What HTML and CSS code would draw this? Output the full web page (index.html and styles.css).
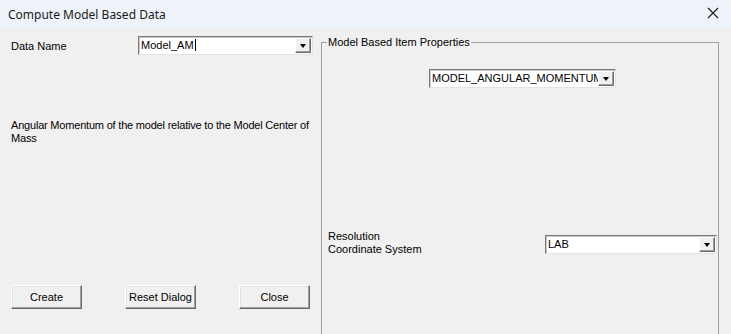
FILE: index.html
```html
<!DOCTYPE html>
<html lang="en">
<head>
    <meta charset="UTF-8">
    <meta name="viewport" content="width=device-width, initial-scale=1.0">
    <title>Compute Model Based Data</title>
    <link rel="stylesheet" href="styles.css">
</head>
<body>
    <div class="window">
        <div class="titlebar">
            <span class="title">Compute Model Based Data</span>
            <svg class="close" width="12" height="12" viewBox="0 0 12 12">
                <path d="M1 1 L11 11 M11 1 L1 11" stroke="#1a1a1a" stroke-width="1.1" fill="none"/>
            </svg>
        </div>

        <div class="dialog">
            <div class="left">
                <div class="row">
                    <span class="label">Data Name</span>
                    <div class="combo name-combo">
                        <span class="value"><span class="caret">Model_AM</span></span>
                        <span class="drop"><span class="arrow"></span></span>
                    </div>
                </div>

                <p class="desc">Angular Momentum of the model relative to the Model Center of Mass</p>

                <div class="buttons">
                    <button class="btn">Create</button>
                    <button class="btn">Reset Dialog</button>
                    <button class="btn">Close</button>
                </div>
            </div>

            <fieldset class="group">
                <legend>Model Based Item Properties</legend>

                <div class="combo item-combo">
                    <span class="value">MODEL_ANGULAR_MOMENTUM</span>
                    <span class="drop"><span class="arrow"></span></span>
                </div>

                <div class="res-row">
                    <span class="label">Resolution<br>Coordinate System</span>
                    <div class="combo lab-combo">
                        <span class="value">LAB</span>
                        <span class="drop"><span class="arrow"></span></span>
                    </div>
                </div>
            </fieldset>
        </div>
    </div>
</body>
</html>
```

FILE: styles.css
```css
body { margin: 0; background-color: #f3f3f3; font-family: "Liberation Sans", Arial, sans-serif; font-size: 11px; color: #000; }
.window { width: 731px; height: 334px; background-color: #f0f0f0; border-radius: 8px 8px 0 0; overflow: hidden; }

.titlebar { height: 29px; background-color: #eef3f9; display: flex; align-items: center; padding: 0 12px 0 8px; }
.title { font-family: "Noto Sans", "Open Sans", sans-serif; font-size: 12px; color: #1a1a1a; flex: 1; }
.close { margin-top: -3px; margin-right: 0; }

.dialog { display: flex; height: 305px; }
.left { width: 310px; padding: 7px 0 25px 11px; display: flex; flex-direction: column; }
.row { display: flex; align-items: center; height: 19px; }
.row .label { width: 127px; }

.combo { display: flex; height: 19px; box-sizing: border-box; background-color: #fff; border: 1px solid; border-color: #7a7a7a #e3e3e3 #e3e3e3 #7a7a7a; box-shadow: inset 1px 1px 0 #c8c8c8; padding: 1px; }
.combo .value { flex: 1; overflow: hidden; white-space: nowrap; line-height: 15px; padding-left: 1px; }
.caret { border-right: 1px solid #000; padding-right: 1px; }
.drop { width: 16px; background-color: #f0f0f0; border: 1px solid; border-color: #fff #696969 #696969 #fff; box-shadow: inset -1px -1px 0 #a0a0a0; display: flex; align-items: center; justify-content: center; box-sizing: border-box; }
.arrow { width: 0; height: 0; border-left: 3.5px solid transparent; border-right: 3.5px solid transparent; border-top: 4px solid #000; margin-top: 1px; }

.name-combo { width: 175px; }
.desc { margin: 64px 0 0 0; width: 310px; line-height: 13px; letter-spacing: -0.2px; }

.buttons { margin-top: auto; display: flex; gap: 43px; }
.btn { width: 71px; height: 24px; padding: 0; font-family: "Liberation Sans", Arial, sans-serif; font-size: 11px; background-color: #f0f0f0; border: 1px solid; border-color: #fff #696969 #696969 #fff; box-shadow: inset -1px -1px 0 #a0a0a0, inset 1px 1px 0 #e3e3e3; color: #000; }

.group { margin: 7px 12px 0 0; padding: 0; border: 1px solid #a0a0a0; width: 398px; height: 320px; box-sizing: border-box; }
.group legend { margin-left: 5px; padding: 0 1px; line-height: 13px; }
.item-combo { width: 187px; margin: 20px 0 0 107px; }
.res-row { display: flex; align-items: flex-start; margin-top: 142px; padding-left: 6px; }
.res-row .label { line-height: 13px; }
.lab-combo { width: 172px; margin: 5px 1px 0 auto; }
```
